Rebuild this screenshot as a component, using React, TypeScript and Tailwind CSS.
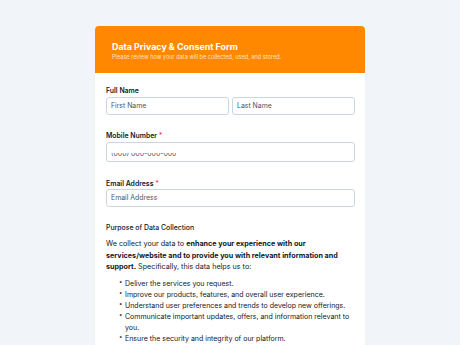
import React from "react";

function Label({ children, required, mb }: { children: React.ReactNode; required?: boolean; mb: string }) {
  return (
    <div className={`text-[6.9px] font-semibold text-[#111827] leading-[9px] ${mb}`}>
      {children}
      {required && <span className="text-[#ef4444]"> *</span>}
    </div>
  );
}

export default function App() {
  const items = [
    "Deliver the services you request.",
    "Improve our products, features, and overall user experience.",
    "Understand user preferences and trends to develop new offerings.",
    "Communicate important updates, offers, and information relevant to you.",
    "Ensure the security and integrity of our platform.",
  ];
  const inputCls =
    "flex-1 flex items-center border border-[#cbd5e1] rounded-[3px] px-[4px] text-[6.9px] text-[#4b5563] bg-white";
  return (
    <div
      className="w-[460px] h-[345px] overflow-hidden bg-[#f1f5f9] pt-[26px]"
      style={{ fontFamily: "Inter, 'Noto Sans', sans-serif" }}
    >
      <div className="ml-[95px] w-[270px] bg-white rounded-[4px] overflow-hidden shadow-[0_1px_2px_rgba(0,0,0,0.05)]">
        <div className="bg-[#ff8800] h-[47px] pl-[17px] pt-[15px]">
          <div className="text-white font-bold text-[8.9px] leading-[11px]">Data Privacy &amp; Consent Form</div>
          <div className="text-[#ffe2c2] text-[5.6px] leading-[8px] mt-[0.5px]">
            Please review how your data will be collected, used, and stored.
          </div>
        </div>
        <div className="pl-[11px] pr-[10px] pt-[13px] pb-[20px]">
          <Label mb="mb-[2px]">Full Name</Label>
          <div className="flex gap-[3px]">
            <div className={`h-[18px] ${inputCls}`}>First Name</div>
            <div className={`h-[18px] ${inputCls}`}>Last Name</div>
          </div>
          <div className="mt-[16px]">
            <Label required mb="mb-[2px]">Mobile Number</Label>
            <div className="flex">
              <div className={`h-[20px] ${inputCls} !items-start`}>
                <div className="mt-[10px] h-[5px] overflow-hidden flex items-end">
                  <span className="leading-[8px]">(000) 000-000-000</span>
                </div>
              </div>
            </div>
          </div>
          <div className="mt-[17px]">
            <Label required mb="mb-[1px]">Email Address</Label>
            <div className="flex">
              <div className={`h-[18px] ${inputCls}`}>Email Address</div>
            </div>
          </div>
          <div className="mt-[16px] text-[6.9px] font-medium text-[#111827] leading-[9px]">
            Purpose of Data Collection
          </div>
          <p className="mt-[6px] text-[7.2px] leading-[11.5px] text-[#111827]">
            We collect your data to{" "}
            <b className="font-bold">
              enhance your experience with our services/website and to provide you with relevant information and support.
            </b>{" "}
            Specifically, this data helps us to:
          </p>
          <ul className="mt-[5px] pl-[13px] text-[7px] leading-[11px] text-[#111827]">
            {items.map((t) => (
              <li key={t} className="flex">
                <span className="w-[6px] shrink-0 text-[6px] leading-[7px]">•</span>
                <span>{t}</span>
              </li>
            ))}
          </ul>
        </div>
      </div>
    </div>
  );
}
